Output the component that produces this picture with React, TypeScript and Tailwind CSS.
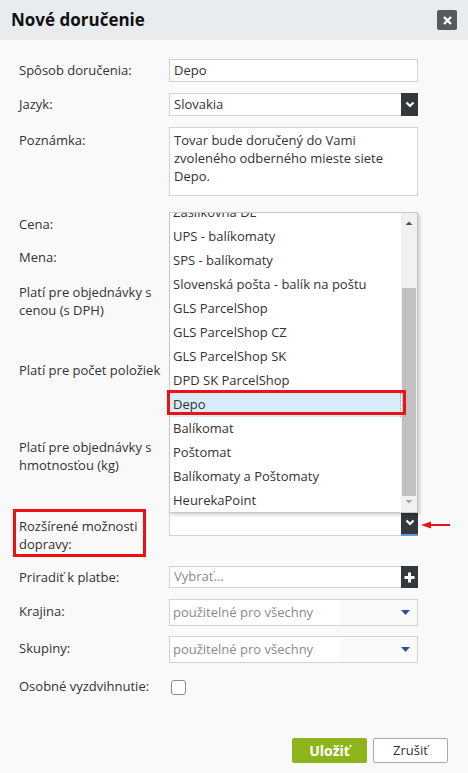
import React from 'react';

const options = [
  'Zásilkovňa DE',
  'UPS - balíkomaty',
  'SPS - balíkomaty',
  'Slovenská pošta - balík na poštu',
  'GLS ParcelShop',
  'GLS ParcelShop CZ',
  'GLS ParcelShop SK',
  'DPD SK ParcelShop',
  'Depo',
  'Balíkomat',
  'Poštomat',
  'Balíkomaty a Poštomaty',
  'HeurekaPoint',
];

function Chevron() {
  return (
    <svg width="10" height="7" viewBox="0 0 10 7">
      <path d="M1.5 1.5 L5 5 L8.5 1.5" fill="none" stroke="#fff" strokeWidth="2.2" />
    </svg>
  );
}

function BlueCaret() {
  return (
    <svg width="9" height="5" viewBox="0 0 9 5" className="mr-[7px]">
      <path d="M0 0 H9 L4.5 5 Z" fill="#2f4fa6" />
    </svg>
  );
}

function Label({ children, pt }: { children: React.ReactNode; pt: string }) {
  return <div className={`w-[150px] shrink-0 leading-[18px] ${pt}`}>{children}</div>;
}

export default function App() {
  return (
    <div
      className="h-[773px] w-[468px] bg-[#f9f9f9] text-[13px] text-[#333]"
      style={{ fontFamily: '"Open Sans", "Liberation Sans", sans-serif' }}
    >
      <div className="flex h-[40px] items-center justify-between bg-[#e9ecef] pl-[11px] pr-[11px]">
        <h1 className="text-[17px] font-bold text-[#111]">Nové doručenie</h1>
        <button className="flex h-[20px] w-[20px] items-center justify-center rounded-[2px] bg-[#575b5f]">
          <svg width="9" height="9" viewBox="0 0 9 9">
            <path d="M1 1 L8 8 M8 1 L1 8" stroke="#fff" strokeWidth="2.4" />
          </svg>
        </button>
      </div>

      <div className="flex flex-col pl-[19px] pr-[20px] pt-[19px]">
        <div className="flex">
          <Label pt="pt-[2px]">Spôsob doručenia:</Label>
          <div className="flex h-[23px] w-[249px] items-center border border-[#d2d2d2] bg-white pl-[4px]">Depo</div>
        </div>

        <div className="mt-[11px] flex">
          <Label pt="pt-[2px]">Jazyk:</Label>
          <div className="flex h-[23px] w-[249px] items-center justify-between border border-[#d2d2d2] bg-white pl-[4px]">
            <span>Slovakia</span>
            <span className="-mr-px flex h-[23px] w-[17px] items-center justify-center bg-[#33383c]">
              <Chevron />
            </span>
          </div>
        </div>

        <div className="mt-[11px] flex">
          <Label pt="pt-[4px]">Poznámka:</Label>
          <div className="h-[69px] w-[249px] border border-[#d2d2d2] bg-white px-[4px] pt-[3px] leading-[18px]">
            Tovar bude doručený do Vami zvoleného odberného mieste siete Depo.
          </div>
        </div>

        <div className="flex flex-col leading-[18px]">
          <div className="mt-[19px]">Cena:</div>
          <div className="mt-[15px]">Mena:</div>
          <div className="mt-[17px] w-[140px]">Platí pre objednávky s cenou (s DPH)</div>
          <div className="mt-[42px]">Platí pre počet položiek</div>
          <div className="mt-[59px] w-[140px]">Platí pre objednávky s hmotnosťou (kg)</div>
        </div>

        <div className="mt-[38px] flex">
          <div className="-ml-[6px] -mt-[3px] mr-[23px] w-[133px] shrink-0 border-[3px] border-[#ee1111] pb-[1px] pl-[3px] pt-[5px] leading-[18px]">
            Rozšírené možnosti dopravy:
          </div>
          <div className="relative flex h-[24px] w-[249px] items-center justify-end border border-[#d2d2d2] bg-white">
            <span className="-mr-px -mt-px flex h-[24px] w-[17px] items-center justify-center border-b-2 border-[#5b9bd5] bg-[#33383c]">
              <Chevron />
            </span>
            <svg width="30" height="8" viewBox="0 0 30 8" className="absolute left-[251px] top-[8px]">
              <path d="M0 4 L10 0.5 L10 3 H29 V5 H10 L10 7.5 Z" fill="#e8141a" />
            </svg>

            <div className="absolute bottom-full left-[-1px] h-[301px] w-[249px] overflow-hidden border border-[#c8c8c8] bg-white shadow-[2px_2px_3px_rgba(0,0,0,0.18)]">
              <div className="-mt-[12px] mr-[16px]">
                {options.map((o) => (
                  <div
                    key={o}
                    className={`relative flex h-[24px] items-center pl-[3px] ${
                      o === 'Depo' ? 'border-r border-dotted border-[#7aa7d8] bg-[#d7ebf8]' : ''
                    }`}
                  >
                    {o}
                  </div>
                ))}
              </div>
              <div className="absolute bottom-0 right-0 top-0 w-[16px] bg-[#f1f1f1]">
                <svg width="16" height="16" viewBox="0 0 16 16" className="absolute left-0 top-[2px]">
                  <path d="M4.5 10 L8 6.5 L11.5 10 Z" fill="#505050" />
                </svg>
                <div className="absolute left-[1px] right-[1px] top-[75px] h-[208px] bg-[#c1c1c1]" />
                <svg width="16" height="16" viewBox="0 0 16 16" className="absolute bottom-[2px] left-0">
                  <path d="M4.5 6 L8 9.5 L11.5 6 Z" fill="#a3a3a3" />
                </svg>
              </div>
            </div>
            <div className="pointer-events-none absolute bottom-[120px] left-[-3px] h-[25px] w-[239px] border-[3px] border-[#ee1111]" />
          </div>
        </div>

        <div className="mt-[9px] flex">
          <Label pt="pt-[2px]">Priradiť k platbe:</Label>
          <div className="flex h-[22px] w-[249px] items-center justify-between border border-[#d2d2d2] bg-white pl-[4px]">
            <span className="text-[#8a8a8a]">Vybrať...</span>
            <span className="-mr-px flex h-[22px] w-[17px] items-center justify-center bg-[#33383c]">
              <svg width="11" height="11" viewBox="0 0 11 11">
                <path d="M5.5 0.5 V10.5 M0.5 5.5 H10.5" stroke="#fff" strokeWidth="3" />
              </svg>
            </span>
          </div>
        </div>

        <div className="mt-[11px] flex">
          <Label pt="pt-[3px]">Krajina:</Label>
          <div className="flex h-[27px] w-[249px] items-center justify-between border border-[#d2d2d2] bg-[#fafafa]">
            <span className="flex h-[25px] w-[170px] items-center bg-white pl-[3px] text-[#8a8a8a]">použitelné pro všechny</span>
            <BlueCaret />
          </div>
        </div>

        <div className="mt-[10px] flex">
          <Label pt="pt-[3px]">Skupiny:</Label>
          <div className="flex h-[27px] w-[249px] items-center justify-between border border-[#d2d2d2] bg-[#fafafa]">
            <span className="flex h-[25px] w-[170px] items-center bg-white pl-[3px] text-[#8a8a8a]">použitelné pro všechny</span>
            <BlueCaret />
          </div>
        </div>

        <div className="mt-[14px] flex">
          <Label pt="pt-0">Osobné vyzdvihnutie:</Label>
          <div className="ml-[2px] mt-[3px] h-[15px] w-[15px] rounded-[3px] border-[1.5px] border-[#8c8c8c] bg-white" />
        </div>

        <div className="mt-[43px] flex justify-end gap-[6px]">
          <button className="h-[25px] w-[75px] rounded-[2px] bg-[#8db51b] text-[14px] font-bold text-white">Uložiť</button>
          <button className="h-[25px] w-[75px] rounded-[2px] border border-[#a9a9a9] bg-white text-[13px] text-[#333]">Zrušiť</button>
        </div>
      </div>
    </div>
  );
}
